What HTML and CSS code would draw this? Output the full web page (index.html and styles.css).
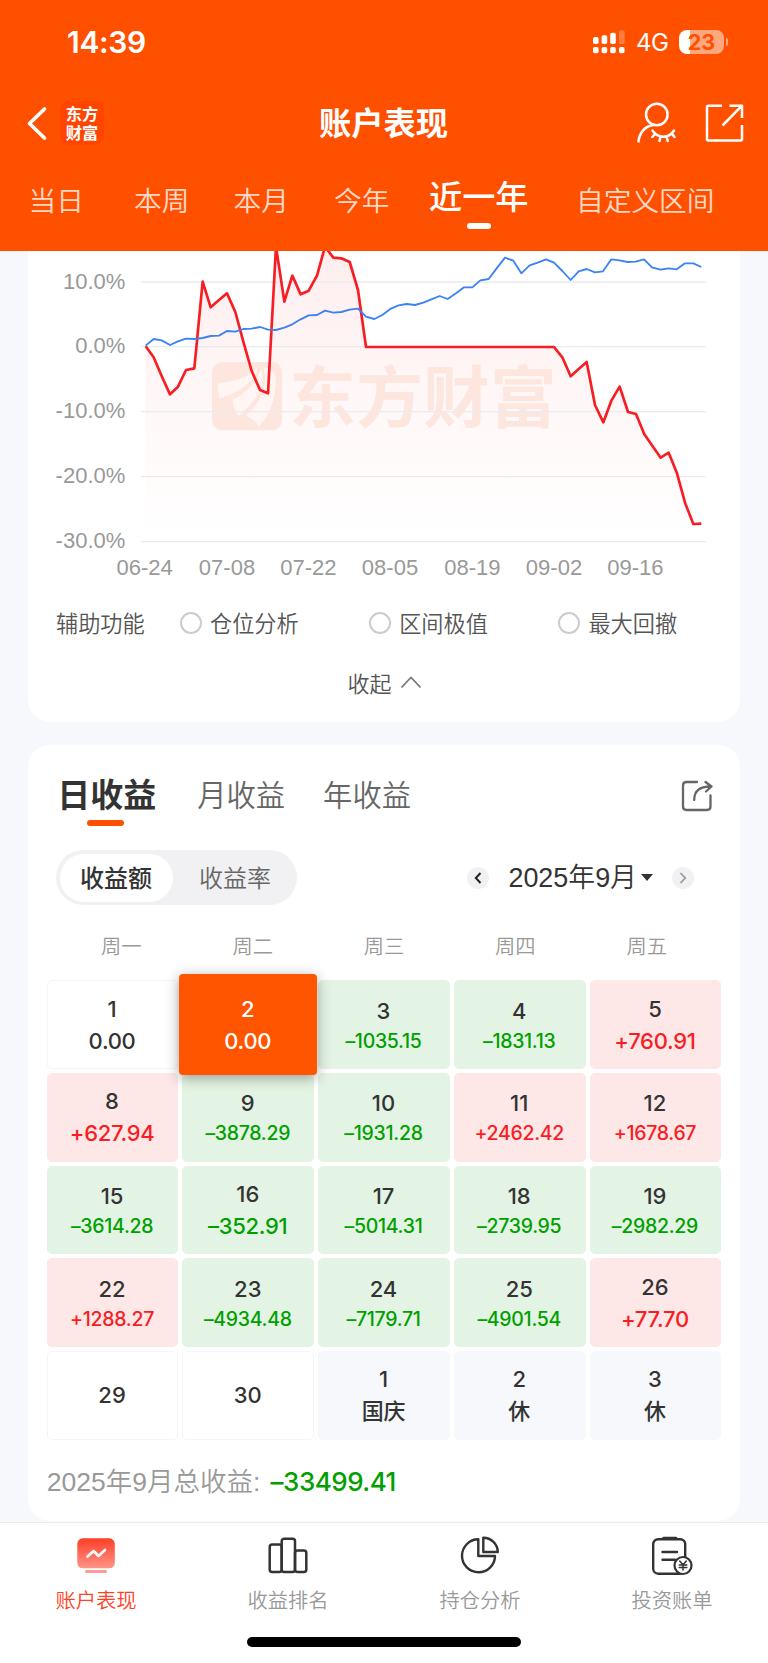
FILE: index.html
```html
<!DOCTYPE html>
<html lang="zh-CN">
<head>
    <meta charset="UTF-8">
    <meta name="viewport" content="width=device-width, initial-scale=1.0">
    <title>账户表现</title>
    <link rel="stylesheet" href="styles.css">
</head>
<body>
    <header class="header">
        <div class="status-bar">
            <span class="time">14:39</span>
            <div class="status-right">
                <svg class="signal" width="32" height="24" viewBox="0 0 32 24" fill="#fff">
                    <rect x="0" y="7" width="5.6" height="7" rx="1.8"/>
                    <rect x="8.6" y="5.3" width="5.6" height="8.7" rx="1.8"/>
                    <rect x="17.2" y="2.8" width="5.6" height="11.2" rx="1.8"/>
                    <rect x="26" y="0.3" width="5.6" height="13.7" rx="1.8" opacity=".25"/>
                    <rect x="0" y="17" width="5.6" height="6.3" rx="1.8"/>
                    <rect x="8.6" y="17" width="5.6" height="6.3" rx="1.8"/>
                    <rect x="17.2" y="17" width="5.6" height="6.3" rx="1.8"/>
                    <rect x="26" y="17" width="5.6" height="6.3" rx="1.8"/>
                </svg>
                <span class="network">4G</span>
                <span class="battery">23</span>
                <span class="battery-tip"></span>
            </div>
        </div>
        <div class="title-bar">
            <div class="title-side">
                <svg width="22" height="34" viewBox="0 0 22 34" fill="none" stroke="#fff" stroke-width="3.6" stroke-linecap="round" stroke-linejoin="round">
                    <path d="M18.5 3L3.5 17.5L18.5 32"/>
                </svg>
                <div class="logo"><span>东方</span><span>财富</span></div>
            </div>
            <h1>账户表现</h1>
            <div class="title-side title-icons">
                <svg width="40" height="42" viewBox="0 0 40 42" fill="none" stroke="#fff" stroke-width="2.5" stroke-linecap="round" stroke-linejoin="round">
                    <circle cx="19.8" cy="13.5" r="10.8"/>
                    <path d="M1.500 40.5C2.500 31 8.500 25 16.500 24"/>
                    <path d="M15.500 29.5C20.500 37.5 32 38 37 29.500M18 33L15.300 36M23.500 35.500L22.500 40M29.500 35.500L30.700 40M34.800 32.500L37.500 36"/>
                </svg>
                <svg width="40" height="42" viewBox="0 0 40 42" fill="none" stroke="#fff" stroke-width="2.5" stroke-linejoin="round">
                    <path d="M17 4.700H3.500Q2 4.700 2 6.200V38Q2 39.500 3.500 39.500H35.500Q37 39.500 37 38V24M24.500 4.700H37V17M37 4.700L17.500 24.500"/>
                </svg>
            </div>
        </div>
        <nav class="range-tabs">
            <span>当日</span>
            <span>本周</span>
            <span>本月</span>
            <span>今年</span>
            <span class="active">近一年</span>
            <span>自定义区间</span>
        </nav>
    </header>

    <main>
        <section class="card chart-card">
            <svg class="chart" viewBox="84 33 2052 1005">
                <defs>
                    <linearGradient id="area" x1="0" y1="0" x2="0" y2="1">
                        <stop offset="0" stop-color="#f81d22" stop-opacity=".075"/>
                        <stop offset="1" stop-color="#f81d22" stop-opacity="0"/>
                    </linearGradient>
                </defs>
                <path fill="url(#area)" d="M437 905V319L461 352L485 408L510 463L534 440L558 390L583 385L608 125L632 202L657 180L681 160L706 216L730 305L755 393L780 450L804 460L828 20L853 185L877 107L902 163L926 152L951 107L975 20L1000 53L1024 55L1049 66L1074 150L1098 321H1662L1687 352L1712 409L1736 387L1760 366L1785 495L1810 547L1834 482L1859 440L1884 516L1908 522L1933 583L1957 617L1982 653L2006 638L2031 700L2055 788L2080 852L2104 851V905Z"/>
                <g class="watermark">
                    <rect x="636" y="366" width="210" height="205" rx="30"/>
                    <path class="cut" d="M654 430C705 424 746 412 772 384C764 426 728 450 658 476Q652 450 654 430Z"/>
                    <path class="cut" d="M698 480C745 455 775 420 782 384C800 438 770 480 716 528C706 515 700 500 698 480Z"/>
                    <path class="cut" d="M790 384C806 440 784 484 738 526C758 536 769 548 778 560C816 518 836 440 824 402C812 386 800 380 790 384Z"/>
                    <text x="868" y="545" textLength="802">东方财富</text>
                </g>
                <g stroke="#ebebef" stroke-width="4">
                    <path d="M423 126H2117M423 320H2117M423 515H2117M423 710H2117M423 905H2117"/>
                </g>
                <polyline class="line-account" points="437,319 461,352 485,408 510,463 534,440 558,390 583,385 608,125 632,202 657,180 681,160 706,216 730,305 755,393 780,450 804,460 828,20 853,185 877,107 902,163 926,152 951,107 975,20 1000,53 1024,55 1049,66 1074,150 1098,321 1662,321 1687,352 1712,409 1736,387 1760,366 1785,495 1810,547 1834,482 1859,440 1884,516 1908,522 1933,583 1957,617 1982,653 2006,638 2031,700 2055,788 2080,852 2104,851"/>
                <polyline class="line-index" points="437,317 461,297 485,301 510,315 534,304 558,296 583,297 608,294 632,288 657,287 681,273 706,275 730,267 755,266 780,261 804,269 828,270 853,263 877,253 902,238 926,226 951,225 975,212 1000,218 1024,216 1049,209 1074,206 1098,230 1123,237 1147,225 1172,206 1196,196 1220,192 1245,195 1270,188 1294,178 1319,168 1343,177 1368,160 1392,142 1417,142 1441,121 1466,117 1490,85 1515,53 1540,62 1564,100 1589,76 1613,68 1638,58 1662,68 1687,93 1712,120 1736,94 1760,87 1785,97 1809,94 1834,58 1858,61 1883,66 1907,65 1932,58 1956,82 1981,89 2006,85 2030,88 2055,70 2080,70 2104,81"/>
                <g class="axis axis-y">
                    <text x="376" y="146">10.0%</text>
                    <text x="376" y="340">0.0%</text>
                    <text x="376" y="535">-10.0%</text>
                    <text x="376" y="730">-20.0%</text>
                    <text x="376" y="925">-30.0%</text>
                </g>
                <g class="axis axis-x">
                    <text x="434" y="1004">06-24</text>
                    <text x="681" y="1004">07-08</text>
                    <text x="925" y="1004">07-22</text>
                    <text x="1170" y="1004">08-05</text>
                    <text x="1417" y="1004">08-19</text>
                    <text x="1662" y="1004">09-02</text>
                    <text x="1906" y="1004">09-16</text>
                </g>
            </svg>
            <div class="options">
                <span class="options-label">辅助功能</span>
                <label class="option"><i></i>仓位分析</label>
                <label class="option"><i></i>区间极值</label>
                <label class="option"><i></i>最大回撤</label>
            </div>
            <div class="collapse">
                收起
                <svg width="20" height="12" viewBox="0 0 20 12" fill="none" stroke="#777" stroke-width="1.6"><path d="M.5 11.500L10 1.500L19.500 11.500"/></svg>
            </div>
        </section>

        <section class="card profit-card">
            <div class="profit-tabs">
                <span class="active">日收益</span>
                <span>月收益</span>
                <span>年收益</span>
                <svg width="32" height="32" viewBox="0 0 32 32" fill="none" stroke="#666" stroke-width="2.3" stroke-linecap="round" stroke-linejoin="round">
                    <path d="M16 2H5.500Q2 2 2 5.500V26.500Q2 30 5.500 30H26Q29.500 30 29.500 26.500V15.500M13.200 20C13.200 11 18.500 6.500 29.500 6.500M24.500 2L30.500 6.500L25 11.500"/>
                </svg>
            </div>
            <div class="toolbar">
                <div class="segment">
                    <span class="active">收益额</span>
                    <span>收益率</span>
                </div>
                <div class="month">
                    <span class="arrow"><svg width="8" height="12" viewBox="0 0 8 12" fill="none" stroke="#222" stroke-width="2"><path d="M6.500 1L1.800 6L6.500 11"/></svg></span>
                    <span class="month-name">2025年9月</span>
                    <i class="caret"></i>
                    <span class="arrow"><svg width="8" height="12" viewBox="0 0 8 12" fill="none" stroke="#999" stroke-width="1.800"><path d="M1.500 1L6.200 6L1.500 11"/></svg></span>
                </div>
            </div>
            <div class="weekdays">
                <span>周一</span><span>周二</span><span>周三</span><span>周四</span><span>周五</span>
            </div>
            <div class="calendar">
                <div class="day"><b>1</b><em>0.00</em></div>
                <div class="day selected"><div class="bubble"><b>2</b><em>0.00</em></div></div>
                <div class="day down small"><b>3</b><em>–1035.15</em></div>
                <div class="day down small"><b>4</b><em>–1831.13</em></div>
                <div class="day up"><b>5</b><em>+760.91</em></div>

                <div class="day up"><b>8</b><em>+627.94</em></div>
                <div class="day down small"><b>9</b><em>–3878.29</em></div>
                <div class="day down small"><b>10</b><em>–1931.28</em></div>
                <div class="day up small"><b>11</b><em>+2462.42</em></div>
                <div class="day up small"><b>12</b><em>+1678.67</em></div>

                <div class="day down small"><b>15</b><em>–3614.28</em></div>
                <div class="day down"><b>16</b><em>–352.91</em></div>
                <div class="day down small"><b>17</b><em>–5014.31</em></div>
                <div class="day down small"><b>18</b><em>–2739.95</em></div>
                <div class="day down small"><b>19</b><em>–2982.29</em></div>

                <div class="day up small"><b>22</b><em>+1288.27</em></div>
                <div class="day down small"><b>23</b><em>–4934.48</em></div>
                <div class="day down small"><b>24</b><em>–7179.71</em></div>
                <div class="day down small"><b>25</b><em>–4901.54</em></div>
                <div class="day up"><b>26</b><em>+77.70</em></div>

                <div class="day"><b>29</b></div>
                <div class="day"><b>30</b></div>
                <div class="day rest"><b>1</b><em>国庆</em></div>
                <div class="day rest"><b>2</b><em>休</em></div>
                <div class="day rest"><b>3</b><em>休</em></div>
            </div>
            <div class="total">2025年9月总收益: <strong>–33499.41</strong></div>
        </section>
    </main>

    <footer class="tab-bar">
        <div class="tab-items">
            <div class="tab active">
                <svg width="42" height="42" viewBox="0 0 42 42">
                    <defs>
                        <linearGradient id="screen" x1="0" y1="0" x2="0" y2="1">
                            <stop offset="0" stop-color="#ff3f26"/>
                            <stop offset="1" stop-color="#ff9488"/>
                        </linearGradient>
                    </defs>
                    <rect x="2.300" y="3.300" width="37.500" height="30" rx="5.500" fill="url(#screen)"/>
                    <rect x="10" y="35" width="22" height="3" rx="1.500" fill="#ff9b90"/>
                    <path d="M12.500 21.500L18.500 16L23.500 21L30 15" fill="none" stroke="#fff" stroke-width="2.600" stroke-linecap="round" stroke-linejoin="round"/>
                </svg>
                <span>账户表现</span>
            </div>
            <div class="tab">
                <svg width="42" height="42" viewBox="0 0 42 42" fill="none" stroke="#333" stroke-width="2.500">
                    <rect x="2.700" y="9.500" width="12" height="27.500" rx="2.500"/>
                    <rect x="14.700" y="3.700" width="13.300" height="33.300" rx="2.500"/>
                    <rect x="28" y="15.500" width="11.300" height="21.500" rx="2.500"/>
                </svg>
                <span>收益排名</span>
            </div>
            <div class="tab">
                <svg width="42" height="42" viewBox="0 0 42 42" fill="none" stroke="#333" stroke-width="2.400" stroke-linejoin="round">
                    <path d="M19.300 4.300A16.500 16.500 0 1 0 36 21H19.300Z"/>
                    <path d="M24.300 2.800A14.500 14.500 0 0 1 38.800 17H24.300Z"/>
                </svg>
                <span>持仓分析</span>
            </div>
            <div class="tab">
                <svg width="42" height="42" viewBox="0 0 42 42" fill="none" stroke="#333" stroke-width="2.400" stroke-linecap="round">
                    <rect x="2.200" y="4.200" width="32" height="34.500" rx="5"/>
                    <path d="M12.500 3.200H25" stroke-width="3"/>
                    <path d="M11.500 17H26M11.500 24.800H24"/>
                    <circle cx="32" cy="30.500" r="8.500" fill="#fff" stroke-width="2.200"/>
                    <path d="M28.700 26L32 29.800L35.300 26M32 29.800V35M28.200 30H35.800M28.200 32.600H35.800" stroke-width="1.500"/>
                </svg>
                <span>投资账单</span>
            </div>
        </div>
        <div class="home-indicator"></div>
    </footer>
</body>
</html>
```

FILE: styles.css
```css
* {
    box-sizing: border-box;
}

body {
    margin: 0;
    width: 768px;
    height: 1663px;
    overflow: hidden;
    display: flex;
    flex-direction: column;
    background-color: #f6f8fb;
    color: #333;
    font-family: "Noto Sans CJK SC", sans-serif;
}

h1, b, em, i, strong {
    margin: 0;
    font-style: normal;
    font-weight: 500;
}

svg {
    display: block;
    flex: none;
}

/* header */
.header {
    height: 251px;
    flex: none;
    background-color: #ff5000;
    color: #fff;
}

.status-bar {
    height: 84px;
    padding: 0 40px 0 67px;
    display: flex;
    align-items: center;
    justify-content: space-between;
    font-family: Inter, sans-serif;
}

.time {
    font-size: 30px;
    font-weight: 600;
    letter-spacing: -0.3px;
}

.status-right {
    display: flex;
    align-items: center;
}

.network {
    margin: 1px 10px 0 11px;
    width: 33px;
    font-size: 24px;
    letter-spacing: -0.5px;
}

.battery {
    width: 45px;
    height: 24px;
    border-radius: 8px;
    background: linear-gradient(to right, #fff 11px, rgba(255, 255, 255, 0.5) 11px);
    color: #ff5000;
    font-size: 21.5px;
    font-weight: 700;
    line-height: 24px;
    text-align: center;
}

.battery-tip {
    width: 2.5px;
    height: 8px;
    margin-left: 1.5px;
    border-radius: 0 3px 3px 0;
    background-color: rgba(255, 255, 255, 0.5);
}

.title-bar {
    height: 78px;
    padding: 0 23px 0 26px;
    display: flex;
    align-items: center;
    justify-content: space-between;
}

.title-side {
    width: 108px;
    display: flex;
    align-items: center;
}

.title-icons {
    justify-content: space-between;
    margin-top: -2px;
}

.title-bar h1 {
    margin: -4px 4px 0 0;
    font-size: 32.3px;
    font-weight: 600;
    line-height: 40px;
}

.logo {
    width: 44px;
    height: 44px;
    margin-left: 12px;
    padding-top: 3px;
    display: flex;
    flex-direction: column;
    border-radius: 9px;
    background-color: #ff4500;
    font-size: 16.3px;
    font-weight: 700;
    line-height: 18.7px;
    text-align: center;
}

.range-tabs {
    height: 76px;
    padding-left: 28.5px;
    display: grid;
    grid-template-columns: 105.5px 99.5px 100.5px 95px 147px 1fr;
    font-size: 27.7px;
    font-weight: 350;
    line-height: 74px;
    white-space: nowrap;
    color: rgba(255, 255, 255, 0.8);
}

.range-tabs .active {
    position: relative;
    justify-self: start;
    font-size: 33.2px;
    font-weight: 500;
    line-height: 65px;
    color: #fff;
}

.range-tabs .active::after {
    content: "";
    position: absolute;
    left: 50%;
    top: 61px;
    width: 24px;
    height: 6px;
    margin-left: -12px;
    border-radius: 3px;
    background-color: #fff;
}

/* cards */
main {
    flex: 1;
    padding: 0 28px;
}

.card {
    background-color: #fff;
    border-radius: 22px;
}

.chart-card {
    height: 471px;
    margin-bottom: 22.7px;
    border-radius: 0 0 22px 22px;
}

.chart {
    width: 684px;
    height: 335px;
}

.axis text {
    font-family: "Liberation Sans", sans-serif;
    font-size: 66px;
    fill: #999;
}

.axis-y text {
    text-anchor: end;
}

.axis-x text {
    text-anchor: middle;
}

.watermark {
    fill: #fde6de;
}

.watermark text {
    font-size: 200px;
    font-weight: 700;
}

.watermark .cut {
    fill: #fff6f4;
}

.line-account,
.line-index {
    fill: none;
    stroke-linejoin: round;
}

.line-account {
    stroke: #f81d22;
    stroke-width: 8;
}

.line-index {
    stroke: #3b82f2;
    stroke-width: 5.5;
}

.options {
    height: 74px;
    padding-left: 28px;
    display: flex;
    align-items: center;
    font-size: 22.2px;
    line-height: 30px;
    font-weight: 350;
    color: #555;
}

.options-label {
    flex: none;
    width: 124px;
    margin-top: -3px;
}

.option {
    flex: none;
    width: 189.2px;
    height: 30px;
    margin-top: -3px;
    display: flex;
    align-items: center;
}

.option i {
    width: 22px;
    height: 22px;
    margin: 3px 8px 0 0;
    border: 2px solid #ccc;
    border-radius: 50%;
}

.collapse {
    height: 44px;
    display: flex;
    align-items: center;
    justify-content: center;
    gap: 9px;
    font-size: 22px;
    font-weight: 350;
    color: #555;
}

.profit-card {
    height: 776px;
    padding: 0 18.700px;
}

.profit-tabs {
    height: 105.5px;
    padding: 0 8px 0 10.500px;
    display: flex;
    align-items: center;
    font-size: 29.3px;
    font-weight: 350;
    line-height: 60px;
    color: #666;
}

.profit-tabs span {
    margin: -8px 38px 0 0;
}

.profit-tabs .active {
    position: relative;
    margin-right: 41px;
    font-size: 33px;
    font-weight: 700;
    color: #333;
}

.profit-tabs .active::after {
    content: "";
    position: absolute;
    left: 50%;
    top: 57px;
    width: 37px;
    height: 6px;
    margin-left: -19.500px;
    border-radius: 3px;
    background-color: #ff5000;
}

.profit-tabs svg {
    margin: -3px 0 0 auto;
}

.toolbar {
    height: 55px;
    padding: 0 27.300px 0 9.300px;
    display: flex;
    align-items: center;
    justify-content: space-between;
}

.segment {
    width: 241px;
    height: 55px;
    padding: 3.500px 4px;
    display: flex;
    border-radius: 28px;
    background-color: #f1f1f4;
    font-size: 24px;
    font-weight: 350;
    line-height: 46px;
    text-align: center;
    color: #666;
}

.segment span {
    flex: none;
    width: 113px;
    margin-right: 6px;
    padding-right: 1px;
}

.segment .active {
    height: 48px;
    border-radius: 24px;
    background-color: #fff;
    font-weight: 500;
    color: #333;
}

.month {
    display: flex;
    align-items: center;
}

.month-name {
    margin-left: 19px;
    font-family: "Liberation Sans", "Noto Sans CJK SC", sans-serif;
    font-size: 26.9px;
    font-weight: 350;
    line-height: 36px;
}

.arrow {
    width: 22px;
    height: 22px;
    display: flex;
    align-items: center;
    justify-content: center;
    border-radius: 50%;
    background-color: #f1f1f4;
}

.caret {
    margin: 0 19px 0 4px;
    border: 6px solid transparent;
    border-top: 7px solid #333;
    border-bottom: 0;
}

.weekdays {
    height: 75px;
    padding: 4px 9px 0;
    display: flex;
    align-items: center;
    font-size: 20.3px;
    font-weight: 350;
    line-height: 28px;
    color: #999;
}

.weekdays span {
    flex: 1;
    text-align: center;
}

/* calendar */
.calendar {
    display: grid;
    grid-template-columns: repeat(5, 1fr);
    grid-auto-rows: 88.700px;
    gap: 4px;
    font-family: Inter, "Noto Sans CJK SC", sans-serif;
    font-size: 22px;
}

.day {
    position: relative;
    padding-right: 1px;
    display: flex;
    flex-direction: column;
    align-items: center;
    justify-content: center;
    gap: 4px;
    border: 1px solid #f5f5f7;
    border-radius: 5px;
    line-height: 28px;
}

.day em {
    letter-spacing: -0.3px;
}

.day.up {
    background-color: #fee7e7;
    border-color: #fee7e7;
}

.day.down {
    background-color: #e4f4e4;
    border-color: #e4f4e4;
}

.day.rest {
    background-color: #f6f8fb;
    border-color: #f6f8fb;
}

.up em {
    color: #f81d22;
}

.down em {
    color: #00a000;
}

.small {
    padding-top: 2px;
    gap: 3px;
}

.small em {
    font-size: 19.500px;
    line-height: 27px;
}

.bubble {
    position: absolute;
    z-index: 1;
    inset: -7.500px -4px;
    padding-right: 1px;
    display: flex;
    flex-direction: column;
    align-items: center;
    justify-content: center;
    gap: 4px;
    border-radius: 4px;
    background-color: #ff5500;
    box-shadow: 0 3px 14px rgba(0, 0, 0, 0.35);
    color: #fff;
}

.total {
    font-family: "Liberation Sans", "Noto Sans CJK SC", sans-serif;
    font-size: 26.5px;
    font-weight: 350;
    line-height: 83px;
    color: #999;
}

.total strong {
    margin-left: 3px;
    font-family: Inter, sans-serif;
    font-size: 26px;
    letter-spacing: -0.5px;
    color: #00a000;
}

/* bottom tabs */
.tab-bar {
    height: 141px;
    flex: none;
    border-top: 1px solid #ebecef;
    background-color: #fff;
}

.tab-items {
    display: flex;
    padding-top: 12px;
}

.tab {
    flex: 1;
    display: flex;
    flex-direction: column;
    align-items: center;
    gap: 7px;
    font-size: 20.300px;
    font-weight: 350;
    line-height: 30px;
    color: #999;
}

.tab.active {
    color: #ff3f26;
}

.home-indicator {
    width: 274px;
    height: 9.500px;
    margin: 23px auto 0;
    border-radius: 5px;
    background-color: #000;
}
```
